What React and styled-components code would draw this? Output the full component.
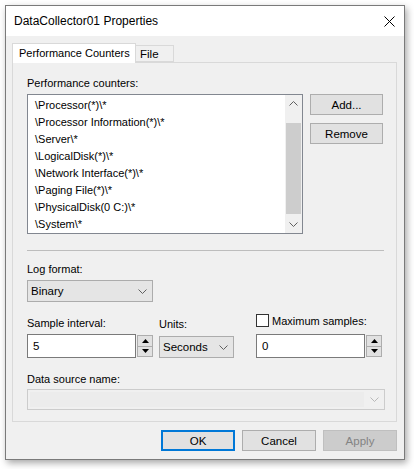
import React from "react";
import styled, { createGlobalStyle } from "styled-components";

const GlobalStyle = createGlobalStyle`
  html, body {
    margin: 0;
    padding: 0;
    background: #fff;
  }
  body {
    font-family: "Liberation Sans", Arial, sans-serif;
    font-size: 11px;
    color: #000;
  }
  * {
    box-sizing: border-box;
  }
`;

const counters = [
  "\\Processor(*)\\*",
  "\\Processor Information(*)\\*",
  "\\Server\\*",
  "\\LogicalDisk(*)\\*",
  "\\Network Interface(*)\\*",
  "\\Paging File(*)\\*",
  "\\PhysicalDisk(0 C:)\\*",
  "\\System\\*",
];

const Chevron = ({ up, color = "#606060" }) => (
  <svg width="9" height="5" viewBox="0 0 9 5">
    <polyline
      points={up ? "0.5,4.5 4.5,0.5 8.5,4.5" : "0.5,0.5 4.5,4.5 8.5,0.5"}
      fill="none"
      stroke={color}
      strokeWidth="1"
    />
  </svg>
);

const Triangle = ({ up }) => (
  <svg width="7" height="4" viewBox="0 0 7 4">
    <polygon points={up ? "0,4 3.5,0 7,4" : "0,0 3.5,4 7,0"} fill="#000" />
  </svg>
);

const Spinner = () => (
  <Spin>
    <SpinBtn>
      <Triangle up />
    </SpinBtn>
    <SpinBtn>
      <Triangle />
    </SpinBtn>
  </Spin>
);

const App = () => {
  return (
    <>
      <GlobalStyle />
      <Page>
        <Window>
          <TitleBar>
            <span>DataCollector01 Properties</span>
            <svg width="11" height="11" viewBox="0 0 11 11">
              <path d="M0.5 0.5 L10.5 10.5 M10.5 0.5 L0.5 10.5" stroke="#000" strokeWidth="1" />
            </svg>
          </TitleBar>
          <Body>
            <Tabs>
              <Tab active>Performance Counters</Tab>
              <Tab>File</Tab>
            </Tabs>
            <Panel>
              <Label>Performance counters:</Label>
              <ListRow>
                <ListBox>
                  <Items>
                    {counters.map((c) => (
                      <Item key={c}>{c}</Item>
                    ))}
                  </Items>
                  <ScrollBar>
                    <ScrollArrow>
                      <Chevron up />
                    </ScrollArrow>
                    <Track>
                      <Thumb />
                    </Track>
                    <ScrollArrow>
                      <Chevron />
                    </ScrollArrow>
                  </ScrollBar>
                </ListBox>
                <SideButtons>
                  <Button>Add...</Button>
                  <Button>Remove</Button>
                </SideButtons>
              </ListRow>
              <Separator />
              <Label top={11}>Log format:</Label>
              <Combo width={126}>
                <span>Binary</span>
                <Chevron />
              </Combo>
              <FieldRow>
                <Group>
                  <Label>Sample interval:</Label>
                  <SpinField>
                    <Input width={109}>5</Input>
                    <Spinner />
                  </SpinField>
                </Group>
                <Group>
                  <Label gap={4}>Units:</Label>
                  <Combo width={75}>
                    <span>Seconds</span>
                    <Chevron />
                  </Combo>
                </Group>
                <Group>
                  <CheckRow>
                    <CheckBox />
                    <span>Maximum samples:</span>
                  </CheckRow>
                  <SpinField>
                    <Input width={109}>0</Input>
                    <Spinner />
                  </SpinField>
                </Group>
              </FieldRow>
              <Label top={14} gap={2}>
                Data source name:
              </Label>
              <DisabledCombo>
                <DisabledEdit />
                <Chevron color="#b8b8b8" />
              </DisabledCombo>
            </Panel>
            <Footer>
              <Button wide primary>
                OK
              </Button>
              <Button wide>Cancel</Button>
              <Button wide disabled>
                Apply
              </Button>
            </Footer>
          </Body>
        </Window>
      </Page>
    </>
  );
};

export default App;

const Page = styled.div`
  width: 414px;
  height: 469px;
  padding: 5px 0 0 5px;
  overflow: hidden;
`;

const Window = styled.div`
  width: 400px;
  height: 455px;
  border: 1px solid #7a7a7a;
  background: #f0f0f0;
  box-shadow: 2px 3px 7px rgba(0, 0, 0, 0.35);
  display: flex;
  flex-direction: column;
`;

const TitleBar = styled.div`
  height: 30px;
  background: #fff;
  display: flex;
  align-items: center;
  justify-content: space-between;
  padding: 0 9px 0 8px;
  font-size: 12px;
`;

const Body = styled.div`
  padding: 7px 7px 0 6px;
  display: flex;
  flex-direction: column;
`;

const Tabs = styled.div`
  display: flex;
  align-items: flex-end;
  height: 19px;
  position: relative;
  z-index: 1;
`;

const Tab = styled.div`
  height: ${(p) => (p.active ? "20px" : "17px")};
  margin-bottom: ${(p) => (p.active ? "-1px" : "0")};
  padding: ${(p) => (p.active ? "2px 6px 0 6px" : "1px 4px 0 4px")};
  width: ${(p) => (p.active ? "124px" : "39px")};
  margin-left: ${(p) => (p.active ? "0" : "-1px")};
  background: ${(p) => (p.active ? "#fff" : "#f0f0f0")};
  border: 1px solid #d9d9d9;
  border-bottom: ${(p) => (p.active ? "none" : "1px solid #d9d9d9")};
  font-size: ${(p) => (p.active ? "11px" : "11.5px")};
  line-height: 14px;
  white-space: nowrap;
`;

const Panel = styled.div`
  width: 385px;
  height: 360px;
  border: 1px solid #d9d9d9;
  background: #f0f0f0;
  padding: 13px 12px 0 14px;
  display: flex;
  flex-direction: column;
`;

const Label = styled.div`
  line-height: 15px;
  height: 15px;
  margin-top: ${(p) => (p.top ? `${p.top}px` : "0")};
  margin-bottom: ${(p) => (p.gap ? `${p.gap}px` : "3px")};
  white-space: nowrap;
`;

const ListRow = styled.div`
  display: flex;
  align-items: flex-start;
  gap: 7px;
`;

const ListBox = styled.div`
  width: 276px;
  height: 140px;
  border: 1px solid #828790;
  background: #fff;
  display: flex;
`;

const Items = styled.div`
  flex: 1;
  padding: 2px 0 0 7px;
`;

const Item = styled.div`
  height: 17px;
  line-height: 17px;
  white-space: nowrap;
`;

const ScrollBar = styled.div`
  width: 17px;
  background: #f0f0f0;
  display: flex;
  flex-direction: column;
`;

const ScrollArrow = styled.div`
  height: 17px;
  display: flex;
  align-items: center;
  justify-content: center;
`;

const Track = styled.div`
  flex: 1;
  padding: 11px 1px 2px 1px;
  display: flex;
`;

const Thumb = styled.div`
  flex: 1;
  background: #cdcdcd;
`;

const SideButtons = styled.div`
  display: flex;
  flex-direction: column;
  gap: 8px;
`;

const Button = styled.div`
  width: ${(p) => (p.wide ? "74px" : "73px")};
  height: 21px;
  display: flex;
  align-items: center;
  justify-content: center;
  background: ${(p) => (p.disabled ? "#cccccc" : "#e1e1e1")};
  border: ${(p) => (p.primary ? "2px solid #0078d7" : p.disabled ? "1px solid #bfbfbf" : "1px solid #adadad")};
  color: ${(p) => (p.disabled ? "#838383" : "#000")};
  font-size: 11.5px;
`;

const Separator = styled.div`
  width: 357px;
  height: 1px;
  margin-top: 16px;
  background: #bdbdbd;
`;

const Combo = styled.div`
  width: ${(p) => p.width}px;
  height: 22px;
  background: #e5e5e5;
  border: 1px solid #acacac;
  display: flex;
  align-items: center;
  justify-content: space-between;
  padding: 0 5px 0 3px;
  font-size: 11.5px;
`;

const FieldRow = styled.div`
  display: flex;
  align-items: flex-end;
  margin-top: 12px;
  gap: 6px;
  & > :last-child {
    margin-left: 16px;
  }
`;

const Group = styled.div`
  display: flex;
  flex-direction: column;
`;

const SpinField = styled.div`
  display: flex;
  height: 24px;
`;

const Input = styled.div`
  width: ${(p) => p.width}px;
  height: 24px;
  background: #fff;
  border: 1px solid #7a7a7a;
  padding-left: 5px;
  display: flex;
  align-items: center;
  font-size: 11.5px;
`;

const Spin = styled.div`
  width: 17px;
  padding: 1px 0 1px 1px;
  display: flex;
  flex-direction: column;
`;

const SpinBtn = styled.div`
  flex: 1;
  background: #e1e1e1;
  border: 1px solid #adadad;
  display: flex;
  align-items: center;
  justify-content: center;
  & + & {
    border-top: none;
  }
`;

const CheckRow = styled.div`
  display: flex;
  align-items: center;
  gap: 3px;
  height: 13px;
  margin-bottom: 7px;
  white-space: nowrap;
`;

const CheckBox = styled.div`
  width: 13px;
  height: 13px;
  border: 1px solid #333;
  background: #fff;
`;

const DisabledCombo = styled.div`
  width: 358px;
  height: 21px;
  border: 1px solid #cccccc;
  background: #f0f0f0;
  display: flex;
  align-items: center;
  padding: 2px 5px 2px 2px;
  gap: 6px;
`;

const DisabledEdit = styled.div`
  flex: 1;
  height: 100%;
  background: #ececec;
`;

const Footer = styled.div`
  display: flex;
  justify-content: flex-end;
  gap: 7px;
  margin-top: 8px;
  width: 385px;
`;
